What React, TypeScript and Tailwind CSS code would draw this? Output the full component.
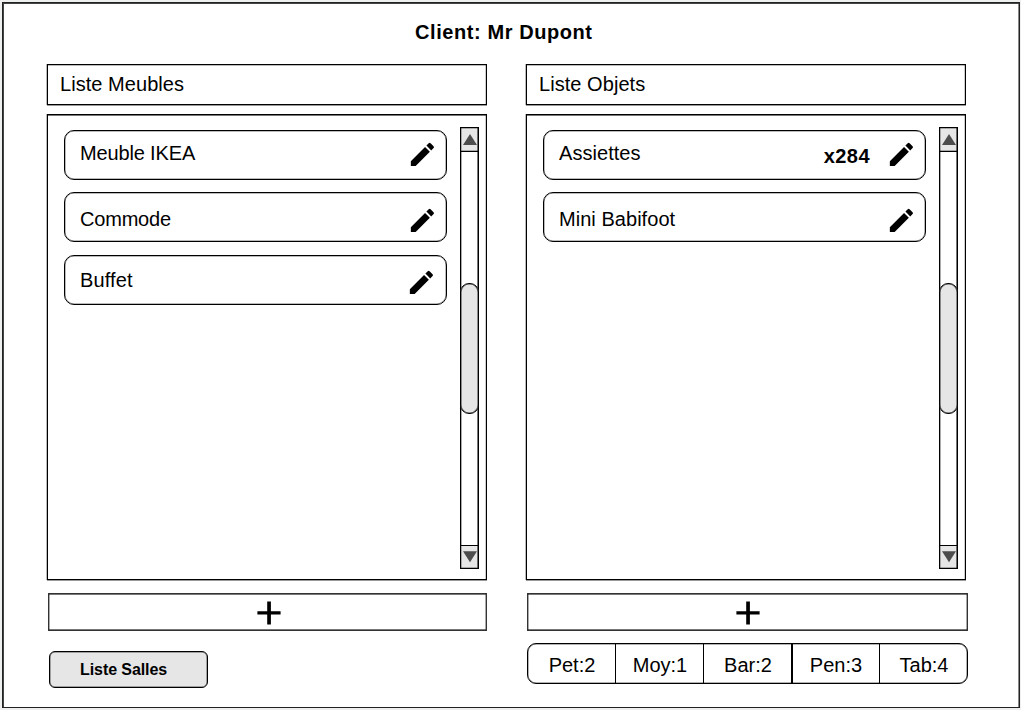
import clsx from "clsx";

type Row = {
  name: string;
  nameClass: string;
  iconClass: string;
  rowClass?: string;
  count?: string;
};

const furniture: Row[] = [
  { name: "Meuble IKEA", nameClass: "pt-[10px] tracking-[-0.15px]", iconClass: "mt-[8px] mr-[8.3px]" },
  { name: "Commode", nameClass: "pt-[14px] tracking-[-0.2px]", iconClass: "mt-[12px] mr-[8.3px]", rowClass: "mt-3" },
  { name: "Buffet", nameClass: "pt-3 tracking-[0.15px]", iconClass: "mt-[10.6px] mr-[9.6px]", rowClass: "mt-[13px]" },
];

const objects: Row[] = [
  { name: "Assiettes", nameClass: "pt-[10px] tracking-[0.05px]", iconClass: "mt-[8px] mr-[8.3px]", count: "x284" },
  { name: "Mini Babifoot", nameClass: "pt-[14px] tracking-[0.04px]", iconClass: "mt-[12px] mr-[8.3px]", rowClass: "mt-3" },
];

const sizes = [
  { label: "Pet:2", cell: "w-[88px] border-r pl-px" },
  { label: "Moy:1", cell: "w-[88px] border-r pl-px" },
  { label: "Bar:2", cell: "w-[89px] border-r-2 pl-px" },
  { label: "Pen:3", cell: "w-[87px] border-r" },
  { label: "Tab:4", cell: "flex-1 pl-px" },
];

function Pencil({ className }: { className: string }) {
  return (
    <svg viewBox="0 0 24 24" className={clsx("h-[30.8px] w-[30.8px] shrink-0", className)} fill="#000">
      <path d="M3 17.25V21h3.75L17.81 9.94l-3.75-3.75L3 17.25zM20.71 7.04a1 1 0 0 0 0-1.41l-2.34-2.34a1 1 0 0 0-1.41 0l-1.83 1.83 3.75 3.75 1.83-1.83z" />
    </svg>
  );
}

function Plus({ className }: { className: string }) {
  return (
    <svg viewBox="0 0 24 24" className={clsx("mt-0.5 h-6 w-6 shrink-0", className)} fill="#000">
      <path d="M10.2 0.4h3.7v23.2h-3.7z M0.4 10.2h23.2v3.4H0.4z" />
    </svg>
  );
}

function ScrollBar() {
  return (
    <div className="flex h-[442px] w-[19px] flex-col border border-black bg-white shadow-[inset_-1px_0_0_#00000088,inset_1px_0_0_#00000055]">
      <div className="flex h-6 items-center justify-center border-b border-black bg-[#e6e6e6] shadow-[inset_-1px_0_0_#00000088,inset_1px_0_0_#00000044,inset_0_1px_0_#00000044,inset_0_-1px_0_#00000044]">
        <svg viewBox="0 0 14 12" className="h-3 w-3.5" fill="#4d4d4d">
          <path d="M7 0 14 11H0z" />
        </svg>
      </div>
      <div className="h-[131px]" />
      <div className="-mx-px h-[131px] rounded-[9px] border border-black bg-[#e6e6e6] shadow-[inset_0_0_0_0.6px_#000000aa]" />
      <div className="flex-1" />
      <div className="flex h-[23px] items-center justify-center border-t border-black bg-[#e6e6e6] pb-px shadow-[inset_-1px_0_0_#00000088,inset_1px_0_0_#00000044,inset_0_-1px_0_#00000044]">
        <svg viewBox="0 0 14 12" className="h-3 w-3.5" fill="#4d4d4d">
          <path d="M0 0.2H14L7 11.3z" />
        </svg>
      </div>
    </div>
  );
}

function Column({ title, rows }: { title: string; rows: Row[] }) {
  return (
    <section className="w-[440px]">
      <h2 className="h-[41px] border border-black pt-[7px] pl-3 leading-6 tracking-[0.05px] shadow-[-1px_0_0_#00000044,0_1px_0_#00000066,inset_0_1px_0_#00000044,inset_-1px_0_0_#00000033]">
        {title}
      </h2>
      <div className="mt-[9px] flex h-[466px] border border-black pt-3 pl-4 shadow-[-1px_0_0_#00000044,0_1px_0_#00000066,inset_0_1px_0_#00000088,inset_-1px_0_0_#00000033]">
        <ul className="w-[383px] pt-[3px]">
          {rows.map((row) => (
            <li
              key={row.name}
              className={clsx(
                "flex h-[50px] rounded-[10px] border border-black pl-[15px] shadow-[inset_0_0_0_0.5px_#00000088]",
                row.rowClass,
              )}
            >
              <span className={clsx("flex-1 leading-6", row.nameClass)}>{row.name}</span>
              {row.count && (
                <span className="mr-4 pt-[13px] font-bold leading-6 tracking-[0.4px]">{row.count}</span>
              )}
              <Pencil className={row.iconClass} />
            </li>
          ))}
        </ul>
        <div className="ml-[13px]">
          <ScrollBar />
        </div>
      </div>
    </section>
  );
}

export default function App() {
  return (
    <div className="h-[710px] w-[1021px] overflow-hidden bg-[#eef0f0] pt-0.5 pl-0.5 font-['Liberation_Sans',Arial,sans-serif] text-[20px] text-black">
      <main className="h-[706px] w-[1018px] border border-[#222] bg-white shadow-[inset_1px_1px_0_#444,inset_-1px_0_0_#00000077]">
        <h1 className="pt-[17px] pl-[412px] font-bold leading-6 tracking-[0.58px]">Client: Mr Dupont</h1>
        <div className="flex gap-[39px] pt-5 pl-11">
          <Column title="Liste Meubles" rows={furniture} />
          <Column title="Liste Objets" rows={objects} />
        </div>
        <div className="flex gap-10 pt-[13px] pl-[45px]">
          <div className="w-[439px]">
            <button className="flex h-[38px] w-full items-center justify-center border border-[#333] shadow-[inset_0_1px_0_#00000088,inset_0_-1px_0_#00000088,inset_1px_0_0_#00000055,inset_-1px_0_0_#00000055]">
              <Plus className="ml-[3px]" />
            </button>
            <button className="mt-5 ml-px flex h-[37px] w-[159px] rounded-md border border-black bg-[#e6e6e6] pt-1.5 pl-[30px] text-[16px] font-bold leading-6 tracking-[-0.08px] shadow-[inset_0_0_0_0.5px_#00000099]">
              Liste Salles
            </button>
          </div>
          <div className="w-[441px]">
            <button className="flex h-[38px] w-full items-center justify-center border border-[#333] shadow-[inset_0_1px_0_#00000088,inset_0_-1px_0_#00000088,inset_1px_0_0_#00000055,inset_-1px_0_0_#00000055]">
              <Plus className="ml-px" />
            </button>
            <div className="mt-3 flex h-[41px] w-[441px] rounded-[9px] border border-black shadow-[inset_0_0_0_0.5px_#00000099]">
              {sizes.map((size) => (
                <div
                  key={size.label}
                  className={clsx("flex items-center justify-center border-black pt-0.5", size.cell)}
                >
                  {size.label}
                </div>
              ))}
            </div>
          </div>
        </div>
      </main>
    </div>
  );
}
